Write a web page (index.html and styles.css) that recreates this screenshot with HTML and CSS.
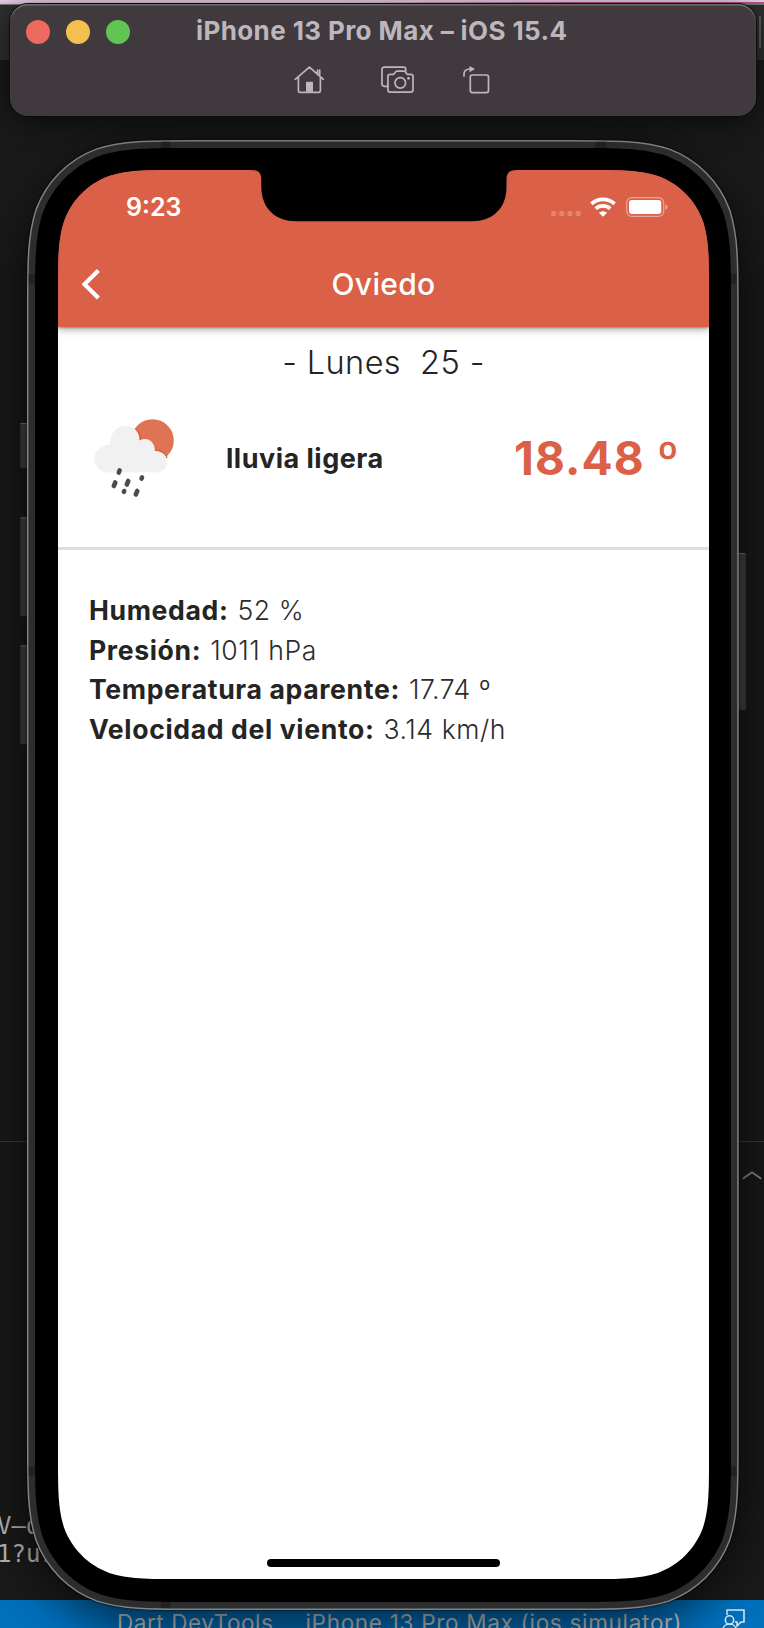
FILE: index.html
```html
<!DOCTYPE html>
<html lang="es">
<head>
<meta charset="utf-8">
<title>iPhone 13 Pro Max – iOS 15.4</title>
<link rel="stylesheet" href="styles.css">
</head>
<body>
<main class="desktop">
  <div class="menu-strip"></div>
  <div class="editor-bar"><span class="editor-split"></span></div>
  <div class="editor"></div>
  <div class="panel">
    <svg class="chevron" viewBox="0 0 20 10"><path d="M.8 7.8 10 1.2l9.2 6.6"/></svg>
    <pre class="terminal"><span>V–d</span>
<span>1?uri</span></pre>
  </div>
  <footer class="status">
    <span class="status-item t-dart">Dart DevTools</span>
    <span class="status-item t-device">iPhone 13 Pro Max (ios simulator)</span>
    <svg class="feedback" viewBox="0 0 24 22"><path d="M5 7V2h17v12h-3l-4 4v-4h-2"/><circle cx="7.5" cy="12" r="4.2"/><path d="M1 22c0-8 13-8 13 0"/></svg>
  </footer>

  <section class="device">
    <div class="device-shadow"></div>
    <svg class="device-body" viewBox="20 130 728 1490">
      <g class="button">
        <rect x="20" y="423" width="10" height="45" rx="1.5"/><rect x="20" y="517" width="10" height="99" rx="1.5"/><rect x="20" y="645" width="10" height="99" rx="1.5"/><rect x="736" y="553" width="10" height="157" rx="1.5"/>
      </g>
      <path class="button-edge" d="M20.500 423.700h7M20.500 518h7M20.500 646h7M738 553.700h7"/>
      <g transform="translate(27.700 140.700) scale(.9976 .9989)">
        <path class="rim" d="M168.200 0H543.800C592.300 0 616.500 0 642.500 8.200C671 18.600 693.400 41 703.800 69.500C712 95.500 712 119.700 712 168.200V1302C712 1350.500 712 1374.700 703.800 1400.700C693.400 1429.200 671 1451.600 642.500 1462C616.500 1470.200 592.300 1470.200 543.800 1470.200H168.200C119.700 1470.200 95.500 1470.200 69.500 1462C41 1451.600 18.600 1429.200 8.200 1400.700C0 1374.700 0 1350.500 0 1302V168.200C0 119.700 0 95.500 8.200 69.500C18.600 41 41 18.600 69.500 8.200C95.500 0 119.700 0 168.200 0Z"/>
        <path class="antenna" d="M133.500 1h9.500v7h-9.500zM569 1h11v7h-11zM1 133.500h7v9.500h-7zM703.500 133.500h7v9.500h-7zM1 1327.500h7v9.500h-7zM703.500 1327.500h7v9.500h-7zM133.500 1462h9.500v7h-9.500z"/>
      </g>
      <path class="bezel" transform="translate(35 148)" d="M157.500 0H538.500C583.900 0 606.600 0 631 7.700C657.600 17.400 678.600 38.400 688.300 65C696 89.400 696 112.100 696 157.500V1296.500C696 1341.900 696 1364.600 688.300 1389C678.600 1415.600 657.600 1436.600 631 1446.300C606.600 1454 583.900 1454 538.500 1454H157.500C112.100 1454 89.400 1454 65 1446.300C38.400 1436.600 17.400 1415.600 7.700 1389C0 1364.600 0 1341.900 0 1296.500V157.500C0 112.100 0 89.400 7.700 65C17.400 38.400 38.400 17.400 65 7.700C89.400 0 112.100 0 157.500 0Z"/>
    </svg>

    <div class="screen">
      <header class="app-header">
        <svg class="notch" viewBox="0 0 264 52"><path d="M0 0H264V.300H263C257 .300 254.500 3.500 254.500 9V17C254.500 39 240 51.200 220 51.200H44C24 51.200 9.500 39 9.300 17V9C9.300 3.500 6.500 .300 1 .300H0Z"/></svg>
        <div class="status-row">
          <span class="t-clock">9:23</span>
          <span class="indicators">
            <svg width="30" height="6" viewBox="0 0 30 6"><g fill="#fff" opacity=".23"><rect width="5.200" height="5.200" rx="1.800"/><rect x="8.200" width="5.200" height="5.200" rx="1.800"/><rect x="16.400" width="5.200" height="5.200" rx="1.800"/><rect x="24.600" width="5.200" height="5.200" rx="1.800"/></g></svg>
            <svg class="wifi" width="26" height="20" viewBox="0 0 26 20"><g fill="none" stroke="#fff" stroke-width="3.600"><path d="M1.400 6.900a17 17 0 0 1 23.200 0"/><path d="M5.700 11.600a11 11 0 0 1 14.600 0"/></g><path fill="#fff" d="M8.900 15.700a6.200 6.200 0 0 1 8.200 0L13 19.700z"/></svg>
            <svg class="battery" width="42" height="20" viewBox="0 0 42 20"><rect x=".7" y=".7" width="37" height="18.600" rx="5" fill="none" stroke="#fff" stroke-opacity=".45" stroke-width="1.200"/><rect x="3" y="3" width="32.300" height="14" rx="3" fill="#fff"/><path d="M39.500 7.200q2 .6 2 2.800t-2 2.800z" fill="#fff" opacity=".5"/></svg>
          </span>
        </div>
        <div class="nav-row">
          <svg class="back" viewBox="0 0 18 31"><path d="M16.400 1.500 2.500 15.300l13.900 13.800"/></svg>
          <h1 class="t-city">Oviedo</h1>
        </div>
      </header>
      <h2 class="t-day">- Lunes&nbsp; 25 -</h2>
      <div class="summary">
        <svg class="weather" viewBox="0 0 82 80">
          <circle cx="58.500" cy="21.500" r="21.300" fill="#de7454"/>
          <path d="M41 10c5 5 5 8 5 12 8-3 14 2 14 10 5-1 10 2 13 7" fill="none" stroke="#e05a3d" stroke-width="2"/>
          <path d="M15 53.500C5 53.500 .5 46 .5 39.500S6 26 16 25.500C16 15 22 7 31 7s15 6 14.500 14.500C54 17 61 23 61 32c7-.5 12.500 5 12.500 11S68 53.500 62 53.500Z" fill="#f1f1f1"/>
          <path d="M25.600 51.500 24.800 53.500M21.300 63.500 19.800 67M34.300 62 32.800 65.500M48 58.500 47.600 59.500M30.200 72 29.900 72.800M43.300 72 41.800 75.500" fill="none" stroke="#4b4b4d" stroke-width="4.600" stroke-linecap="round"/>
        </svg>
        <span class="t-desc">lluvia ligera</span>
        <span class="t-temp">18.48 º</span>
      </div>
      <dl class="details">
        <div><dt>Humedad:</dt><dd>52 %</dd></div>
        <div><dt>Presión:</dt><dd>1011 hPa</dd></div>
        <div><dt>Temperatura aparente:</dt><dd>17.74 º</dd></div>
        <div><dt>Velocidad del viento:</dt><dd>3.14 km/h</dd></div>
      </dl>
      <div class="home-bar"></div>
    </div>
  </section>

  <section class="window">
    <div class="title-row">
      <i class="light red"></i><i class="light amber"></i><i class="light green"></i>
      <span class="t-title">iPhone 13 Pro Max – iOS 15.4</span>
    </div>
    <div class="tools">
      <svg width="31" height="28" viewBox="0 0 31 28"><g fill="none" stroke="#bdb7bd" stroke-width="1.700" stroke-linecap="round" stroke-linejoin="round"><path d="M1.200 13.300 15.400 1.200l14 12.100M4.400 11v13.600q0 1.700 1.700 1.700h18.600q1.700 0 1.700-1.700V11M23.600 4v4M25.700 4v5"/></g><path fill="#bdb7bd" d="M12 15.800h7v10h-7z"/></svg>
      <svg width="34" height="28" viewBox="0 0 34 28"><g fill="none" stroke="#bdb7bd" stroke-width="1.700" stroke-linejoin="round"><path d="M7.500 20.300H3.300q-2.300 0-2.300-2.300V3.500q0-2.300 2.300-2.300h19.200q2.300 0 2.300 2.300v2"/><path d="M9.200 8.300h3.500l2-2.500q.6-.7 1.500-.7h6.500q.9 0 1.500.7l2 2.500h3.500q2.300 0 2.300 2.300v13.200q0 2.300-2.300 2.300H9.200q-2.300 0-2.300-2.300V10.600q0-2.300 2.300-2.300z"/><circle cx="19.300" cy="16.900" r="5.300"/></g><circle cx="27.500" cy="12.300" r="1.400" fill="#bdb7bd"/></svg>
      <svg width="27" height="29" viewBox="0 0 27 29"><g fill="none" stroke="#bdb7bd" stroke-width="1.700" stroke-linecap="round"><rect x="7.300" y="9" width="18.200" height="17.600" rx="2"/><path d="M1 10V8.500q0-5.500 6-5.500"/></g><path fill="#bdb7bd" d="M6.500 0 12 3 6.500 6.200z"/></svg>
    </div>
  </section>
</main>
</body>
</html>
```
FILE: styles.css
```css
* { box-sizing: border-box; }
body { margin: 0; font-family: Inter, "Liberation Sans", sans-serif; }
h1, h2, dl, dd, pre { margin: 0; font-weight: inherit; }
.desktop { position: relative; width: 764px; height: 1628px; overflow: hidden; background: #1a1a1a; display: flex; flex-direction: column; }
.menu-strip { flex: none; height: 4px; background: linear-gradient(#e8cfe5 0 2px, transparent 2px), linear-gradient(90deg, #dfc6dc 45%, #b5548a 75%); }
.editor-bar { flex: none; height: 56px; background: #2f2f30; border-top: 1px solid #777; display: flex; justify-content: flex-end; padding: 11px 3px 0 0; }
.editor-split { width: 2px; height: 32px; background: #5c5c5c; }
.editor { flex: none; height: 1081px; }
.panel { flex: none; height: 459px; border-top: 1px solid #3c3c3c; display: flex; flex-direction: column; }
.chevron { flex: none; width: 20px; height: 10px; margin: 29px 2px 0 auto; fill: none; stroke: #8c8c8c; stroke-width: 1.7; }
.terminal { margin-top: 331px; margin-left: -3px; font: 24px/28px "DejaVu Sans Mono", monospace; color: #b8b8b8; }
.status { flex: none; height: 28px; background: #0070bd; display: flex; padding: 11px 18px 0 117px; color: #ccc; }
.status-item { font-size: 22.500px; line-height: 24px; letter-spacing: .55px; white-space: nowrap; }
.t-device { margin-left: 32px; letter-spacing: .7px; }
.feedback { width: 24px; height: 22px; margin: -3px 0 0 auto; fill: none; stroke: #dfe9f2; stroke-width: 1.500; }
.device { position: absolute; inset: 0; }
.device-shadow { position: absolute; left: 27px; top: 140px; width: 712px; height: 1470px; border-radius: 130px; box-shadow: 0 14px 45px 10px rgba(0,0,0,.55); }
.device-body { position: absolute; left: 20px; top: 130px; width: 728px; height: 1490px; }
.button { fill: #2c2c2c; stroke: #1e1e1e; stroke-width: .6; }
.button-edge { fill: none; stroke: #4d4d4d; stroke-width: 1.2; }
.rim { fill: #2d2d2e; stroke: #828282; stroke-width: 1.500; filter: drop-shadow(0 0 1px #000); }
.antenna { fill: #222; }
.bezel { fill: #000; }
.screen { position: absolute; left: 58px; top: 170px; width: 651px; height: 1409px; color: #242424; display: flex; flex-direction: column;
  background: linear-gradient(#da6048 150px, #fff 150px);
  clip-path: path("M123.8 0H527.2C562.8 0 580.7 0 599.8 6.1C620.8 13.7 637.3 30.2 644.9 51.2C651 70.3 651 88.2 651 123.8V1285.2C651 1320.8 651 1338.7 644.9 1357.8C637.3 1378.8 620.8 1395.3 599.8 1402.9C580.7 1409 562.8 1409 527.2 1409H123.8C88.2 1409 70.3 1409 51.2 1402.900C30.2 1395.3 13.7 1378.8 6.1 1357.8C0 1338.7 0 1320.8 0 1285.2V123.8C0 88.2 0 70.3 6.1 51.2C13.7 30.2 30.2 13.7 51.2 6.1C70.3 0 88.2 0 123.8 0Z"); }
.app-header { position: relative; flex: none; height: 157px; background: #da6048; color: #fff; box-shadow: 0 2px 8px rgba(0,0,0,.38), 0 1px 2px rgba(0,0,0,.25); }
.notch { position: absolute; left: 193.500px; top: 0; width: 264px; height: 52px; }
.status-row { display: flex; align-items: flex-start; justify-content: space-between; padding: 22px 42px 0 68px; height: 72px; }
.t-clock { font-size: 25px; line-height: 30px; font-weight: 600; }
.indicators { display: flex; align-items: flex-end; height: 25px; }
.indicators svg { flex: none; }
.wifi { margin-left: 9px; }
.battery { margin-left: 10px; margin-right: -1px; }
.nav-row { display: grid; grid-template-columns: 1fr auto 1fr; align-items: center; height: 85px; padding: 0 24px 1px; }
.back { width: 18px; height: 31px; fill: none; stroke: #fff; stroke-width: 4.200; }
.t-city { font-size: 30px; line-height: 34px; font-weight: 500; letter-spacing: .3px; margin-top: -1px; }
.t-day { margin-top: 15px; text-align: center; font-size: 32.500px; line-height: 42px; letter-spacing: .4px; font-weight: 360; white-space: pre; }
.summary { flex: none; height: 166px; display: flex; align-items: center; padding: 0 29px 14px 36px; border-bottom: 3px solid #dedede; }
.weather { width: 82px; height: 80px; }
.t-desc { margin-left: 50px; font-size: 27px; font-weight: 700; letter-spacing: .5px; }
.t-temp { margin: -2px 0 0 auto; font-size: 46px; font-weight: 700; letter-spacing: 1.1px; color: #da6048; }
.details { padding: 41px 31px; font-size: 26.600px; line-height: 39.500px; }
.details div { display: flex; gap: 9px; height: 39.500px; }
dt { font-weight: 700; letter-spacing: .64px; }
dd { color: #2c2c2c; font-weight: 350; letter-spacing: .55px; }
.home-bar { margin: auto auto 12.500px; width: 233px; height: 7.500px; border-radius: 4px; background: #000; }
.window { position: absolute; left: 10px; top: 4px; width: 746px; height: 112px; border-radius: 18px; background: #403a3e; box-shadow: 0 0 0 1px #0c0c0c, inset 0 1.500px 1px #707070, 0 6px 30px rgba(0,0,0,.6); }
.title-row { display: flex; gap: 16px; padding: 16px 16px 0; height: 62px; }
.light { width: 24px; height: 24px; border-radius: 50%; }
.red { background: #ed6a5e; }
.amber { background: #f5bf4f; }
.green { background: #61c554; }
.t-title { margin-left: 50px; margin-top: -6px; font-size: 26px; line-height: 34px; letter-spacing: .4px; font-weight: 700; color: #bdb7bd; white-space: nowrap; }
.tools { display: flex; padding-left: 284px; }
.tools svg:nth-child(2) { margin-left: 56px; }
.tools svg:nth-child(3) { margin-left: 48px; }
```
